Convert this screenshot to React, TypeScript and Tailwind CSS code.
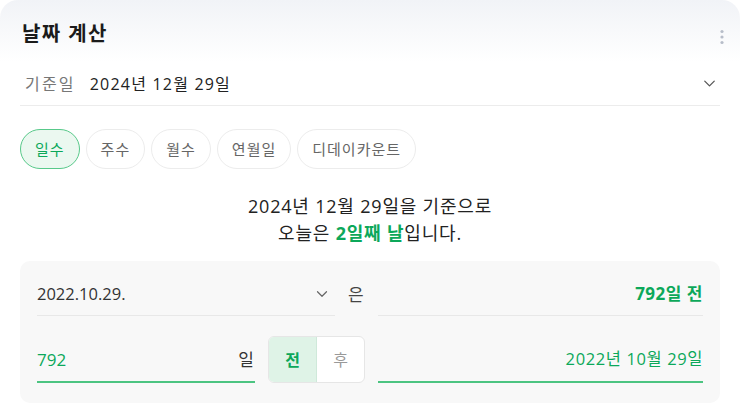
import { ChevronDown } from 'lucide-react'

const tabs = ['일수', '주수', '월수', '연월일', '디데이카운트']

export default function App() {
    return (
        <div className="w-[740px] h-[408px] bg-white overflow-hidden" style={{ fontFamily: '"Open Sans", "Noto Sans CJK KR", sans-serif' }}>
            <div className="rounded-t-[18px] bg-gradient-to-b from-[#f1f3f7] to-white to-[62px] h-full">
                {/* header */}
                <div className="flex items-start justify-between pl-[22px] pr-[16px] pt-[24px] h-[62px]">
                    <h2 className="text-[20px] font-bold text-[#1b1b1b] leading-none tracking-[1.4px]">날짜 계산</h2>
                    <svg width="4" height="16" viewBox="0 0 4 16" className="mt-[5px]">
                        <circle cx="2" cy="2.5" r="1.6" fill="#b7bdc9" />
                        <circle cx="2" cy="8" r="1.6" fill="#b7bdc9" />
                        <circle cx="2" cy="13.5" r="1.6" fill="#b7bdc9" />
                    </svg>
                </div>

                {/* base date */}
                <div className="mx-[20px] flex items-center justify-between h-[44px] border-b border-[#ececec] pl-[5px] pr-[1px]">
                    <div className="flex items-center text-[16px]">
                        <span className="text-[#777] tracking-[2.2px]">기준일</span>
                        <span className="ml-[14px] text-[#222] tracking-[1.2px]">2024년 12월 29일</span>
                    </div>
                    <ChevronDown className="w-[19px] h-[19px] text-[#555]" strokeWidth={1.6} />
                </div>

                {/* tabs */}
                <div className="flex gap-[6px] px-[20px] mt-[23px]">
                    {tabs.map((t, i) => (
                        <button
                            key={t}
                            className={
                                'h-[40px] rounded-full px-[14px] text-[15px] tracking-[1px] border ' +
                                (i === 0
                                    ? 'border-[#58c98a] bg-[#ebf8f0] text-[#0ca85a]'
                                    : 'border-[#ececec] bg-white text-[#666]')
                            }
                        >
                            {t}
                        </button>
                    ))}
                </div>

                {/* summary */}
                <div className="text-center text-[18px] text-[#222] leading-[27px] mt-[24px] tracking-[0.8px]">
                    <p>2024년 12월 29일을 기준으로</p>
                    <p>
                        오늘은 <b className="text-[#0ca85a] font-bold">2일째 날</b>입니다.
                    </p>
                </div>

                {/* calc box */}
                <div className="mx-[20px] mt-[14px] rounded-[10px] bg-[#f8f8f8] px-[17px] pb-[20px]">
                    <div className="flex items-center h-[55px] pt-[12px]">
                        <div className="w-[298px] h-full flex items-center justify-between border-b border-[#e8e8e8] pr-[4px]">
                            <span className="text-[16.5px] text-[#333]">2022.10.29.</span>
                            <ChevronDown className="w-[18px] h-[18px] text-[#666]" strokeWidth={1.6} />
                        </div>
                        <span className="ml-[13px] w-[30px] text-[17px] text-[#444]">은</span>
                        <div className="flex-1 h-full flex items-center justify-end border-b border-[#e8e8e8]">
                            <span className="text-[17px] font-bold text-[#0ca85a] tracking-[0.5px]">792일 전</span>
                        </div>
                    </div>
                    <div className="flex items-center mt-[20px]">
                        <div className="w-[218px] h-[47px] flex items-center justify-between border-b-2 border-[#4cc481] pr-[1px] pt-[2px]">
                            <span className="text-[17px] text-[#0ca85a]">792</span>
                            <span className="text-[17px] text-[#333]">일</span>
                        </div>
                        <div className="ml-[13px] flex h-[47px] w-[97px] rounded-[6px] border border-[#e6e6e6] overflow-hidden bg-white">
                            <button className="flex-1 bg-[#dff3e7] text-[#0ca85a] font-bold text-[16px] border-r border-[#cfe9da]">전</button>
                            <button className="flex-1 text-[#999] text-[16px]">후</button>
                        </div>
                        <div className="ml-[13px] flex-1 h-[47px] flex items-center justify-end border-b-2 border-[#4cc481] pt-[2px]">
                            <span className="text-[16.5px] text-[#0ca85a] tracking-[0.6px]">2022년 10월 29일</span>
                        </div>
                    </div>
                </div>
            </div>
        </div>
    )
}
